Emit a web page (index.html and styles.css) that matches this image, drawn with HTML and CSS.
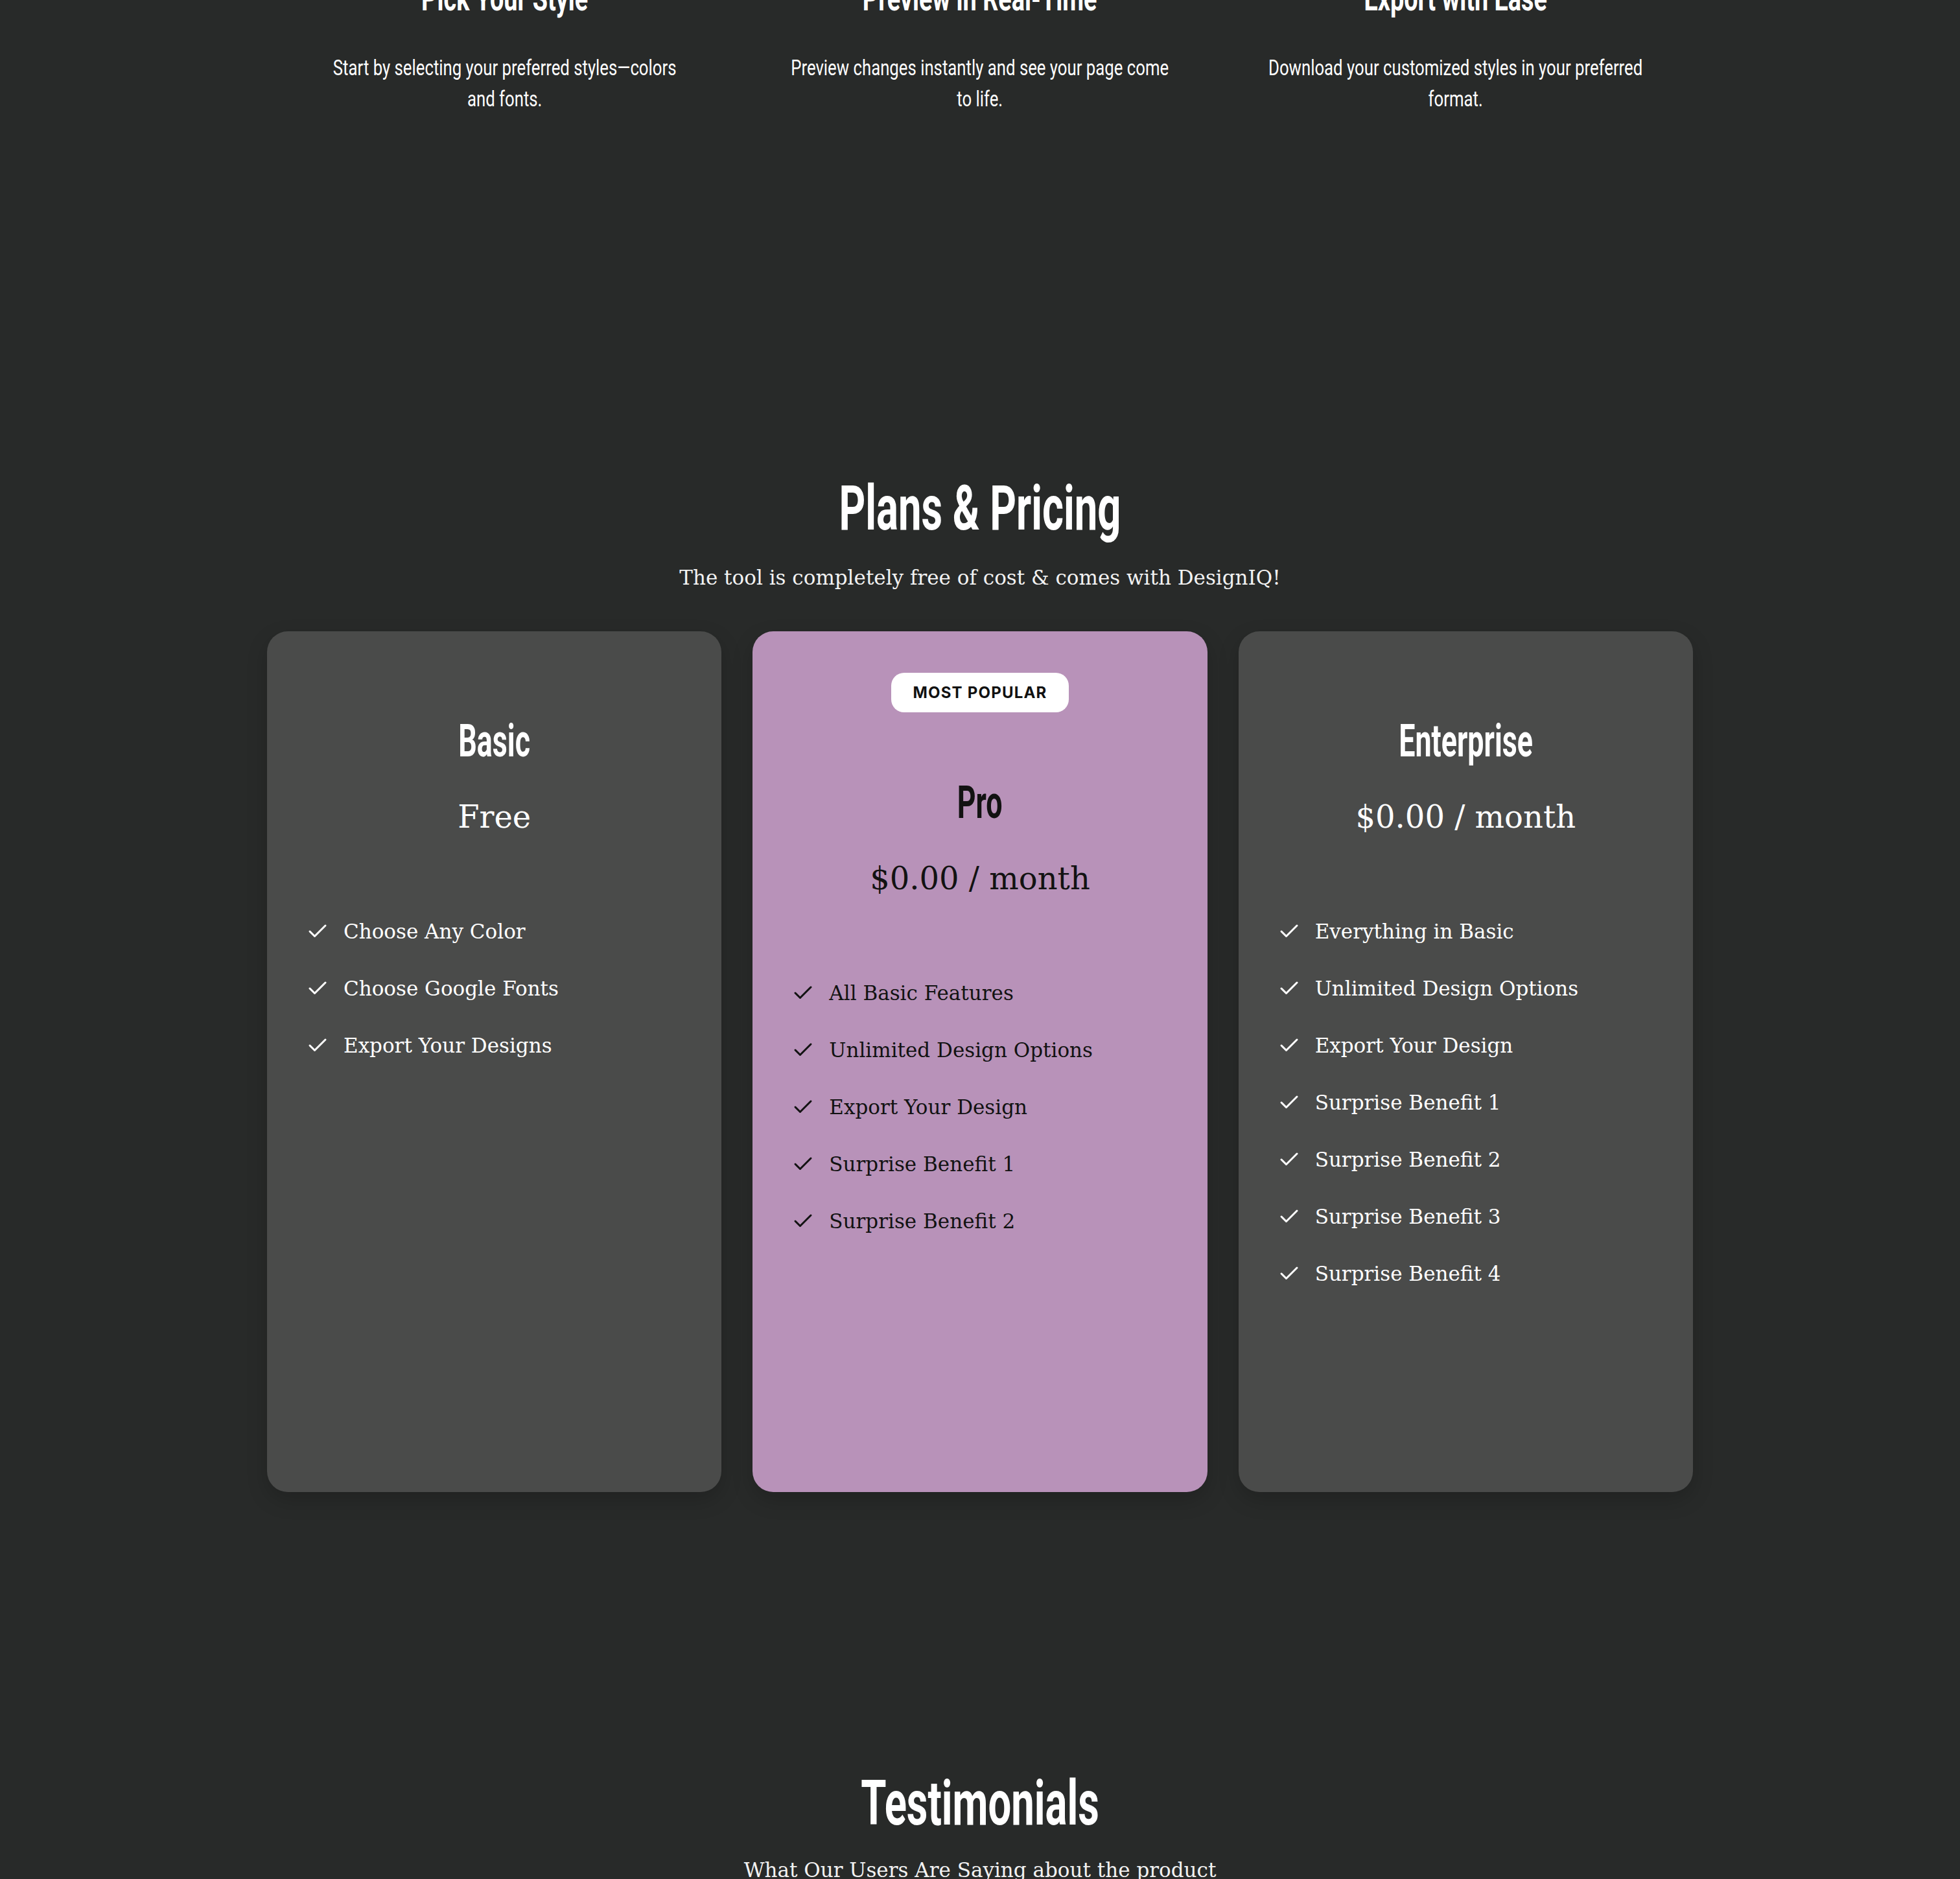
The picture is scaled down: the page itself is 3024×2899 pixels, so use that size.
FILE: index.html
```html
<!DOCTYPE html>
<html lang="en">
<head>
<meta charset="utf-8">
<title>DesignIQ — Plans &amp; Pricing</title>
<link rel="stylesheet" href="styles.css">
</head>
<body>
  <section class="steps">
    <div class="container steps-grid">
      <div class="step">
        <h3 class="step-title">Pick Your Style</h3>
        <p class="step-text">Start by selecting your preferred styles—colors<br>and fonts.</p>
      </div>
      <div class="step">
        <h3 class="step-title">Preview in Real-Time</h3>
        <p class="step-text">Preview changes instantly and see your page come to life.</p>
      </div>
      <div class="step">
        <h3 class="step-title">Export with Ease</h3>
        <p class="step-text">Download your customized styles in your preferred format.</p>
      </div>
    </div>
  </section>

  <section class="pricing">
    <div class="container">
      <h2 class="section-title">Plans &amp; Pricing</h2>
      <p class="section-sub">The tool is completely free of cost &amp; comes with DesignIQ!</p>
      <div class="plans">
        <article class="plan">
          <h3 class="plan-name">Basic</h3>
          <p class="plan-price">Free</p>
          <ul class="features">
            <li><svg class="check" viewBox="0 0 24 24"><polyline points="20 6 9 17 4 12"/></svg>Choose Any Color</li>
            <li><svg class="check" viewBox="0 0 24 24"><polyline points="20 6 9 17 4 12"/></svg>Choose Google Fonts</li>
            <li><svg class="check" viewBox="0 0 24 24"><polyline points="20 6 9 17 4 12"/></svg>Export Your Designs</li>
          </ul>
        </article>
        <article class="plan plan-pro">
          <span class="badge">MOST POPULAR</span>
          <h3 class="plan-name">Pro</h3>
          <p class="plan-price">$0.00 / month</p>
          <ul class="features">
            <li><svg class="check" viewBox="0 0 24 24"><polyline points="20 6 9 17 4 12"/></svg>All Basic Features</li>
            <li><svg class="check" viewBox="0 0 24 24"><polyline points="20 6 9 17 4 12"/></svg>Unlimited Design Options</li>
            <li><svg class="check" viewBox="0 0 24 24"><polyline points="20 6 9 17 4 12"/></svg>Export Your Design</li>
            <li><svg class="check" viewBox="0 0 24 24"><polyline points="20 6 9 17 4 12"/></svg>Surprise Benefit 1</li>
            <li><svg class="check" viewBox="0 0 24 24"><polyline points="20 6 9 17 4 12"/></svg>Surprise Benefit 2</li>
          </ul>
        </article>
        <article class="plan">
          <h3 class="plan-name">Enterprise</h3>
          <p class="plan-price">$0.00 / month</p>
          <ul class="features">
            <li><svg class="check" viewBox="0 0 24 24"><polyline points="20 6 9 17 4 12"/></svg>Everything in Basic</li>
            <li><svg class="check" viewBox="0 0 24 24"><polyline points="20 6 9 17 4 12"/></svg>Unlimited Design Options</li>
            <li><svg class="check" viewBox="0 0 24 24"><polyline points="20 6 9 17 4 12"/></svg>Export Your Design</li>
            <li><svg class="check" viewBox="0 0 24 24"><polyline points="20 6 9 17 4 12"/></svg>Surprise Benefit 1</li>
            <li><svg class="check" viewBox="0 0 24 24"><polyline points="20 6 9 17 4 12"/></svg>Surprise Benefit 2</li>
            <li><svg class="check" viewBox="0 0 24 24"><polyline points="20 6 9 17 4 12"/></svg>Surprise Benefit 3</li>
            <li><svg class="check" viewBox="0 0 24 24"><polyline points="20 6 9 17 4 12"/></svg>Surprise Benefit 4</li>
          </ul>
        </article>
      </div>
    </div>
  </section>

  <section class="testimonials">
    <div class="container">
      <h2 class="section-title">Testimonials</h2>
      <p class="section-sub testimonials-sub">What Our Users Are Saying about the product</p>
    </div>
  </section>
</body>
</html>
```

FILE: styles.css
```css
* {
  box-sizing: border-box;
}

body {
  margin: 0;
  background: #282a29;
  color: #ffffff;
  font-family: "DejaVu Serif", "Liberation Serif", serif;
}

.container {
  width: 2200px;
  margin: 0 auto;
}

/* condensed display face (narrowed grotesque) */
.step-title,
.step-text,
.section-title,
.plan-name {
  font-family: "Roboto", "Liberation Sans", sans-serif;
  transform-origin: 50% 50%;
}

/* ---------- How it works steps ---------- */
.steps {
  margin-top: -34px;
  padding-bottom: 272px;
}

.steps-grid {
  display: grid;
  grid-template-columns: repeat(3, 1fr);
}

.step {
  text-align: center;
  padding: 0 72px;
}

.step-title {
  margin: 0;
  font-weight: 700;
  font-size: 54px;
  line-height: 64px;
  transform: scaleX(0.7);
}

.step-text {
  margin: 51px -84px 0;
  font-weight: 400;
  font-size: 33px;
  line-height: 48px;
  transform: scaleX(0.78);
}

/* ---------- Pricing ---------- */
.pricing {
  padding-top: 278px;
  padding-bottom: 210px;
  text-align: center;
}

.section-title {
  margin: 0;
  font-weight: 700;
  font-size: 96px;
  line-height: 114px;
  transform: scaleX(0.66);
}

.section-sub {
  margin: 26px 0 0;
  font-size: 31px;
  line-height: 48px;
  color: #f2f2f2;
}

.plans {
  display: grid;
  grid-template-columns: repeat(3, 1fr);
  gap: 48px;
  margin-top: 59px;
}

.plan {
  display: flex;
  flex-direction: column;
  min-height: 1328px;
  padding: 64px 0;
  background: #4a4b4a;
  border-radius: 32px;
  box-shadow: 0 12px 32px rgba(0, 0, 0, 0.18);
  color: #ffffff;
}

.plan-pro {
  background: #b892b9;
  color: #121212;
}

.badge {
  align-self: center;
  margin-bottom: 34px;
  padding: 16px 33px;
  background: #ffffff;
  color: #111111;
  border-radius: 20px;
  font-family: "Inter", "Liberation Sans", sans-serif;
  font-weight: 700;
  font-size: 24px;
  line-height: 29px;
  letter-spacing: 0.05em;
}

.plan-name {
  margin: 63px 0 0;
  text-align: center;
  font-weight: 700;
  font-size: 70px;
  line-height: 84px;
  transform: scaleX(0.64);
}

.plan-price {
  margin: 43px 0 0;
  text-align: center;
  font-size: 48px;
  line-height: 64px;
}

.features {
  list-style: none;
  margin: 121px 0 0;
  padding: 0 60px;
  display: flex;
  flex-direction: column;
  gap: 40px;
}

.features li {
  display: flex;
  align-items: center;
  gap: 22px;
  text-align: left;
  font-size: 31px;
  line-height: 48px;
}

.check {
  flex: none;
  width: 36px;
  height: 36px;
  fill: none;
  stroke: currentColor;
  stroke-width: 2;
  stroke-linecap: round;
  stroke-linejoin: round;
}

/* ---------- Testimonials ---------- */
.testimonials {
  padding-top: 213px;
  padding-bottom: 200px;
  text-align: center;
}

.testimonials-sub {
  margin-top: 22px;
}
```
